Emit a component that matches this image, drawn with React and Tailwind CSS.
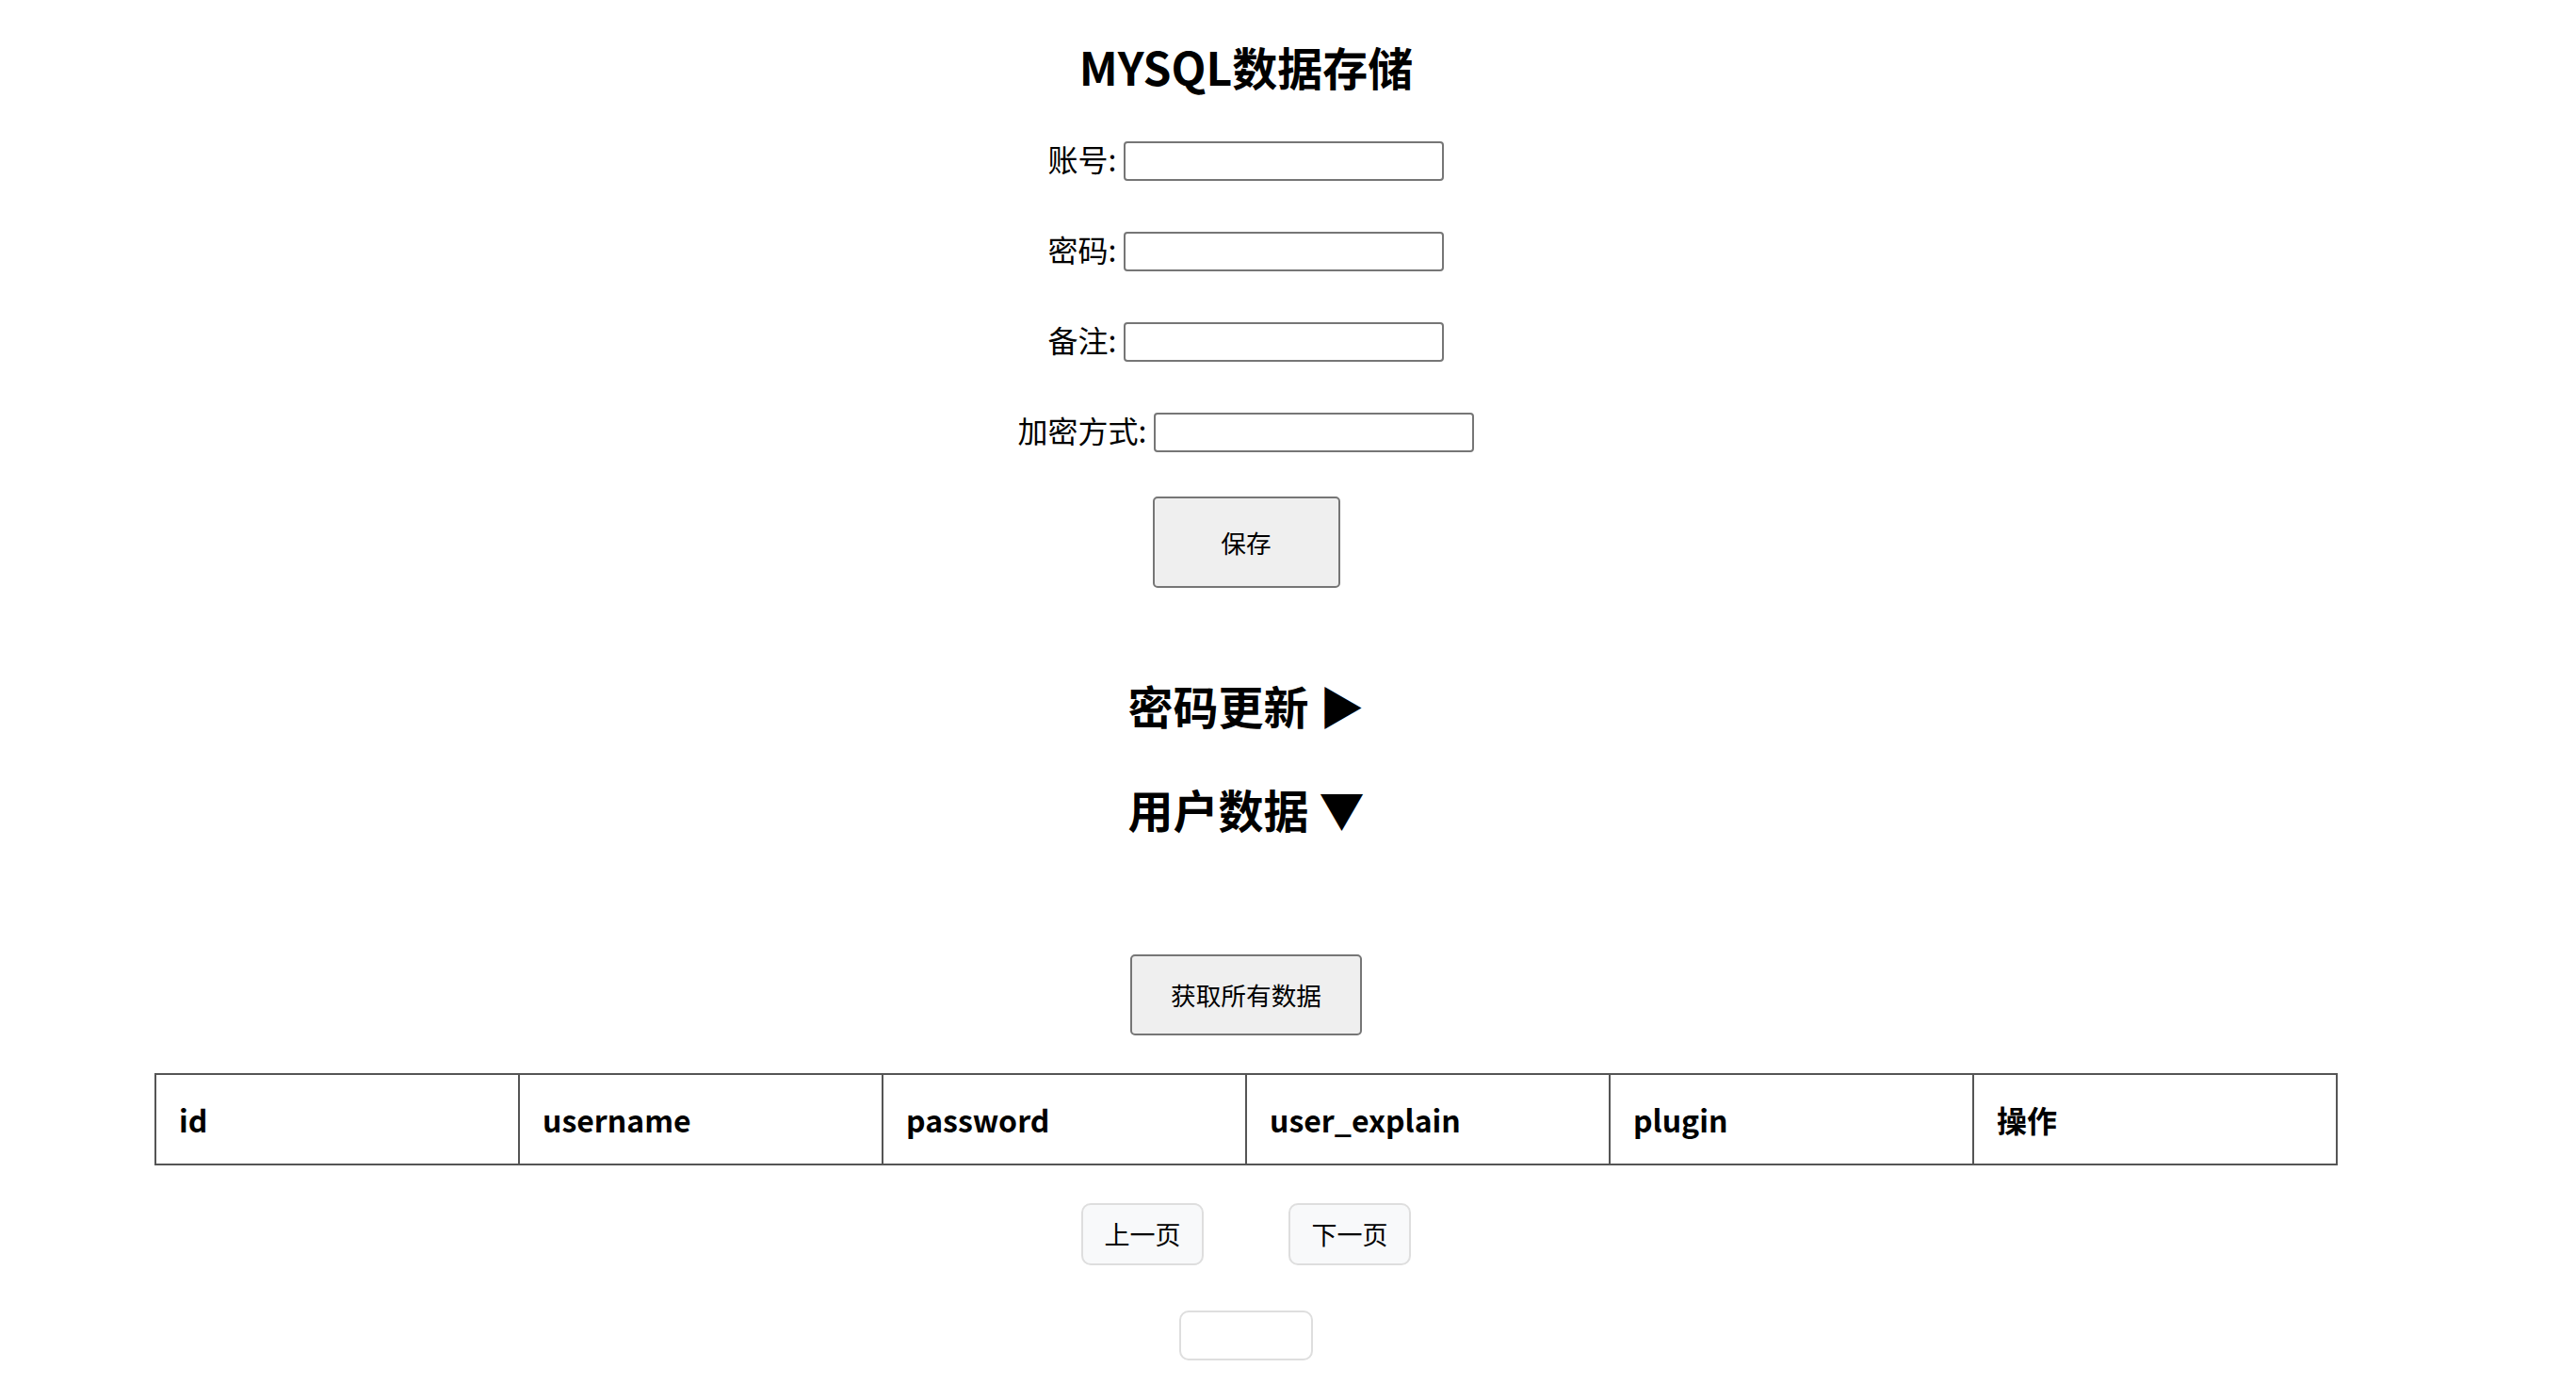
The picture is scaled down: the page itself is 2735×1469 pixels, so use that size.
import { useState } from 'react'

const fields = ['账号', '密码', '备注', '加密方式']
const columns = ['id', 'username', 'password', 'user_explain', 'plugin', '操作']

export default function App() {
  const [values, setValues] = useState({})

  return (
    <div className="w-[2646px] flex flex-col items-center text-black font-['Noto_Sans_CJK_SC','Noto_Sans',sans-serif]">
      <h2 className="mt-[41px] text-[48px] leading-[58px] font-bold">MYSQL数据存储</h2>

      <div className="mt-[51px] flex flex-col items-center gap-[54px]">
        {fields.map((f) => (
          <label key={f} className="flex items-center gap-[8px] h-[42px] text-[32px]">
            <span className="pb-[6px]">{f}:</span>
            <input
              value={values[f] || ''}
              onChange={(e) => setValues({ ...values, [f]: e.target.value })}
              className="w-[340px] h-[42px] border-2 border-[#767676] rounded-[4px] bg-white px-2 text-[26px]"
            />
          </label>
        ))}
      </div>

      <button className="mt-[47px] w-[199px] h-[97px] bg-[#efefef] border-2 border-[#767676] rounded-[5px] text-[26.67px]">
        保存
      </button>

      <h2 className="mt-[95px] text-[48px] leading-[58px] font-bold">密码更新 ▶</h2>
      <h2 className="mt-[52px] text-[48px] leading-[58px] font-bold">用户数据 ▼</h2>

      <button className="mt-[126px] w-[246px] h-[86px] bg-[#efefef] border-2 border-[#767676] rounded-[5px] text-[26.67px]">
        获取所有数据
      </button>

      <table className="mt-[40px] w-[2318px] table-fixed border-collapse border-2 border-[#666]">
        <thead>
          <tr>
            {columns.map((c) => (
              <th key={c} className="h-[96px] border-2 border-[#555] pl-[24px] text-left text-[32px] font-bold">
                {c}
              </th>
            ))}
          </tr>
        </thead>
      </table>

      <div className="mt-[40px] flex gap-[90px]">
        <button className="w-[130px] h-[66px] bg-[#f8f9fa] border-2 border-[#dedede] rounded-[10px] text-[27px]">上一页</button>
        <button className="w-[130px] h-[66px] bg-[#f8f9fa] border-2 border-[#dedede] rounded-[10px] text-[27px]">下一页</button>
      </div>

      <input className="mt-[48px] mb-[24px] w-[142px] h-[53px] bg-white border-2 border-[#dedede] rounded-[10px]" />
    </div>
  )
}
